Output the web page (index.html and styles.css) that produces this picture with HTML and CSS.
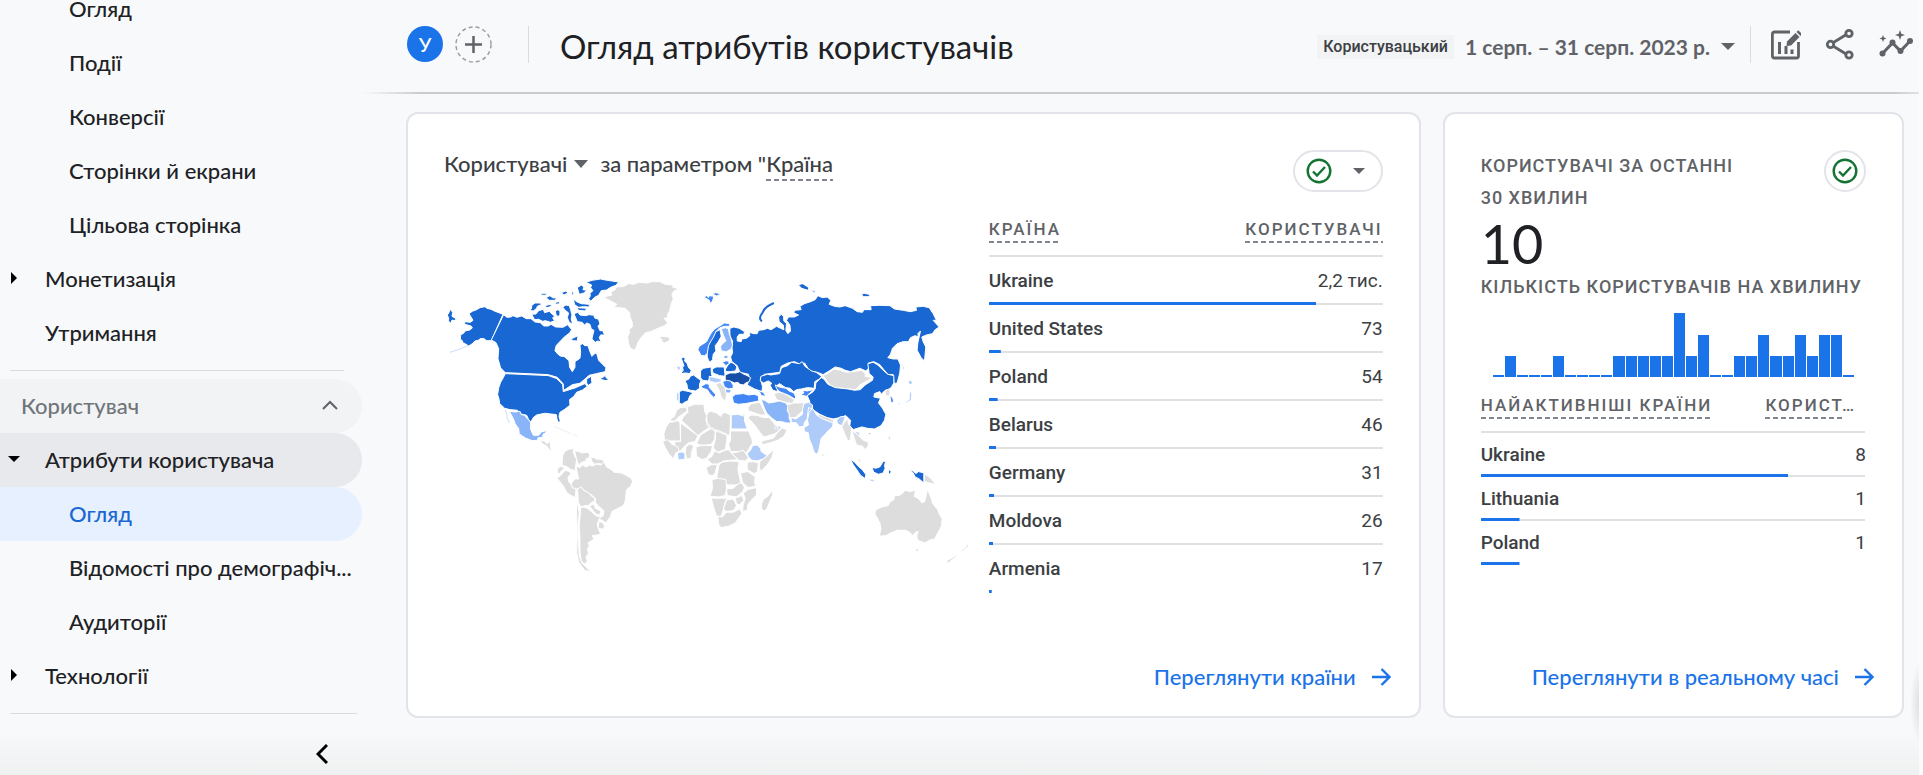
FILE: index.html
```html
<!DOCTYPE html>
<html lang="uk">
<head>
<meta charset="utf-8">
<title>Огляд атрибутів користувачів</title>
<link rel="stylesheet" href="styles.css">
</head>
<body>
<div class="app">
  <nav class="sidebar" aria-label="Звіти">
    <ul class="nav-list nav-top">
      <li><a class="nav-item child" href="#">Огляд</a></li>
      <li><a class="nav-item child" href="#">Події</a></li>
      <li><a class="nav-item child" href="#">Конверсії</a></li>
      <li><a class="nav-item child" href="#">Сторінки й екрани</a></li>
      <li><a class="nav-item child" href="#">Цільова сторінка</a></li>
      <li><a class="nav-item" href="#"><span class="mark"><svg width="6" height="12" viewBox="0 0 6 12"><path d="M0 0l6 6-6 6z"/></svg></span>Монетизація</a></li>
      <li><a class="nav-item" href="#"><span class="mark"></span>Утримання</a></li>
    </ul>
    <hr class="rule">
    <button class="nav-item section" type="button">Користувач
      <svg width="16" height="10" viewBox="0 0 16 10" fill="none" stroke="#5f6368" stroke-width="2"><path d="M1 9l7-7 7 7"/></svg>
    </button>
    <ul class="nav-list">
      <li><a class="nav-item open" href="#"><span class="mark"><svg width="12" height="6" viewBox="0 0 12 6"><path d="M0 0h12L6 6z"/></svg></span>Атрибути користувача</a></li>
      <li><a class="nav-item child current" href="#" aria-current="page">Огляд</a></li>
      <li><a class="nav-item child" href="#">Відомості про демографіч...</a></li>
      <li><a class="nav-item child" href="#">Аудиторії</a></li>
      <li><a class="nav-item" href="#"><span class="mark"><svg width="6" height="12" viewBox="0 0 6 12"><path d="M0 0l6 6-6 6z"/></svg></span>Технології</a></li>
    </ul>
    <hr class="rule wide">
    <button class="collapse" type="button" aria-label="Згорнути"><svg width="12" height="20" viewBox="0 0 12 20" fill="none" stroke="#000" stroke-width="3"><path d="M11 1l-9 9 9 9"/></svg></button>
  </nav>

  <main class="main">
    <header class="header">
      <button class="avatar" type="button">У</button>
      <button class="add" type="button" aria-label="Додати порівняння"><svg width="37" height="37" viewBox="0 0 37 37" fill="none"><circle cx="18.500" cy="18.500" r="17.500" stroke="#9aa0a6" stroke-width="1.500" stroke-dasharray="4 3"/><path d="M18.500 10v17M10 18.500h17" stroke="#5f6368" stroke-width="2.500"/></svg></button>
      <span class="divider"></span>
      <h1 class="title">Огляд атрибутів користувачів</h1>
      <button class="date" type="button"><span class="chip">Користувацький</span><span>1 серп. – 31 серп. 2023 р.</span><svg width="14" height="7" viewBox="0 0 14 7" fill="#5f6368"><path d="M0 0h14L7 7z"/></svg></button>
      <span class="divider"></span>
      <div class="tools">
        <button type="button" aria-label="Налаштувати звіт"><svg width="32" height="32" viewBox="0 0 32 32" fill="none" stroke="#5f6368" stroke-width="2.800"><path d="M21 4H5.500Q3.400 4 3.400 6v22q0 2 2.100 2h22q2 0 2-2V14"/><path d="M10.500 14v12M17 18v8M23 21.500v4.500" stroke-width="3"/><path d="M17.500 18l.5-4.500L26.500 5l4 4-8.500 8.500z" fill="#5f6368" stroke="none"/><path d="M27.500 4l1.800-1.800 4 4L31.500 8z" fill="#5f6368" stroke="none"/></svg></button>
        <button type="button" aria-label="Поділитися"><svg width="30" height="32" viewBox="0 0 30 32" fill="none" stroke="#5f6368" stroke-width="2.800"><path d="M8 14.700l13-8M8 18l13 8"/><circle cx="5.500" cy="16.400" r="3.200"/><circle cx="24" cy="5.500" r="3.200"/><circle cx="24" cy="27" r="3.200"/></svg></button>
        <button type="button" aria-label="Статистика"><svg width="34" height="32" viewBox="0 0 34 32" fill="#5f6368"><path d="M3.500 25.500l10-10.500 8 8 9.500-10" fill="none" stroke="#5f6368" stroke-width="3"/><circle cx="3.500" cy="25.500" r="3"/><circle cx="13.500" cy="14.500" r="3"/><circle cx="21.500" cy="23" r="3"/><circle cx="31" cy="13" r="3"/><path d="M21 2l1.300 3.700L26 7l-3.700 1.300L21 12l-1.300-3.700L16 7l3.700-1.300zM4 7l1 2.500 2.500 1L5 11.500 4 14l-1-2.500-2.500-1L3 9.500z"/></svg></button>
      </div>
    </header>

    <div class="cards">
      <section class="card">
        <div class="card-head">
          <h2 class="card-title"><button class="metric" type="button">Користувачі<svg width="14" height="8" viewBox="0 0 14 8" fill="#5f6368"><path d="M0 0h14L7 8z"/></svg></button><span>за параметром "<span class="dashed">Країна</span></span></h2>
          <button class="status pill" type="button" aria-label="Якість даних"><svg width="26" height="26" viewBox="0 0 26 26" fill="none" stroke="#137333" stroke-width="2.400"><circle cx="13" cy="13" r="11.300"/><path d="M7 13.500l4 4 8-8.500"/></svg><svg width="12" height="6" viewBox="0 0 12 6" fill="#5f6368"><path d="M0 0h12L6 6z"/></svg></button>
        </div>
        <div class="geo">
          <svg class="map" viewBox="42 40 1590 900" role="img" aria-label="Карта світу">
            <g class="b">
              <path d="M117 162l10-7 13-5 10-6 15-3 6 5 12 3 10 5 26 10-35 79-14 0-8-6-12 0-5 5-10 2-9 9-10 6-13-8-5-2-1-6-6-4 1-14 9-4 4-7 14-3 8-6-4-6-19-5 0-8 17 2 8-6z"/>
              <path d="M52 166l4-5 4-12 8 9-2 12 14 8-8 5-6-2-3 10-8-7 1-8z"/>
              <path d="M221 165l10 8 12-1 6-4 12 5 14-4 14 8 14 0 12 10 16 2 10 10 14 0 8-5 14 8 22 1 14-8 12 15-6 10-16 12-14 15-10 10-4 16 8 10 8 6 12 2 14 12 2 20 8 13 8-13 0-17 15-10 2-18-2-22 8-4 6 6 10 0 6 18 6 14 8-8 6-2 6 22 8 8 14 14-2 12-26 6-22 5-14 12-14 12-22 4-28 18 0-20-18-20-28-8-128-6-14-14-8-28 2-30-8-18-14-8z"/>
              <path d="M226 342L355 348L380 357L398 375L400 396L435 385L465 372L472 380L458 391L440 398L432 410L419 420L420 437L403 450L390 458L387 470L391 484L386 490L381 478L379 465L362 463L345 461L320 466L310 474L303 487L296 480L290 467L272 463L262 452L240 450L224 446L209 432L207 418L203 405L206 385L212 368L221 352z"/>
              <path d="M470 358l14-8 2 20-12 8-4-8zM512 354l8-1 6-6 3 8 8 5-9 3-14-3zM420 238l10-3 14-7-2 16-12-1z"/>
              <path d="M468 68l18-6 26-4 14 3 40 6-8 10-16 6-12 8-16 2-8 14-12 6-12 12-6-8 5-8-1-8 9-8-7-9 3-8zM442 84l12-8 8 6-3 8 11 2-8 8-14 4zM432 162l12-4 6 8 16 2 12-3 14 2 2 8 12 4 4 14-6 6 6 14 8 0 6 13-12 0-4 8 6 14-10-4-8 4-10-10 4-18 2-8-8-4-4-14-10-4-6 6-8-8-14-2z"/>
              <path d="M305 164l13-1 8-10 14-4 4 10 14-4 8 8 8 6-6 6 6 8-12 5-16-5-8 2-12-6-12 1zM296 152l8-4 2-12 10-6 14 0 6 4-14 6-2 6-10 8zM430 118l10 8 14 6 24 2 0 8-18-1-14 2-12-8zM348 114l12-6 8 6 14 2-8 6-16 0zM376 154l8-4 6 4 0 10-6 8-6-8zM394 99l14-5 6 6-12 6zM398 142l10-6 10 2 4 12 4 16-2 12 4 16-10-6-6-14 4-14-10-8zM330 106l8-5 14 0-6 6zM425 95l6 4 0 8-5-2zM376 128l12-2 2 6-12 2zM440 144l30 2-4 8-20-2zM345 138l16-4 4 6-14 4z"/>
            </g>
            <path class="l" d="M238 455l16 2 16-2 4 10 10 2 8 10 10 10 0 22 8 18 16 0 8-10 16-4-4 8-6 2-2 10-14 2-2 8-16 0-20-8-18-12-2-16-10-14-6-16z"/>
            <path class="thin-l" d="M225 450l6 14 0 10 8 16M60 278l25-8 30-12"/>
            <g class="g">
              <path d="M520 112l26-6-4-10 12-4 6-10 22-2 14-8 16 2 14-6 26 2 12-4 26 0 16 8 24 2-2 6 20 6-16 6-6 10 4 14-6 14-2 10-4 14-6 10 2 8-12 2 12 14-10 8-20 8-22 10-16 4-14 16-8 12-6 18-6 6-12-8-4-12-3-20 6-14-2-8 10-8 0-14-6-14-2-16-14-12-18-2-16-2 10-8z"/>
              <path d="M687 233l10-3 20 2 3 10-16 8-8-3 0-8zM328 541l16 4 8 8 8-8 2 10 0 12 8 8-12-4-8-12-12-6z"/>
              <path d="M398 588l6-12 12-7 16-2-2 12 6 14 4 6-2 14-2 20-14-4-12-8-14-4zM434 574l14 2 6 4 18-2 8 8-2 8-10 4 0 8-14 2-6 10-6-12-4-14zM482 592l10 2 6 4 18 2 8 6-6 8-14-2-10 2-8-8zM384 624l10-4 10 6-10 8-4 8-8-2zM380 654l10-4 10-12 8-6 16 8-10 14 2 12 12 14 8 0 2 10-2 24-16-8-10-8-12-22z"/>
              <path d="M438 620l12 4 8-8 10 6 12-6 6 4 12-6 16 2 8-10 8 16 14 8 8 8 22 2 16 8 14 8 4 10-6 14-12 10-2 14-2 20-6 14-20 10-14 8-4 14-14 20-12-8-10-4 14-10 2-14-16-14-10-12 0-12-14-12-16-8-10-10-16 2-14-4-2-12 10-14 12 0z"/>
              <path d="M443 688l10-6 8 10 16 8 8 10 8 4 2 12-10 2-10 10-10 0-12 4-8-14zM478 738l14-4 4 12 16 8-2 12-12-2zM452 746l8-4 12 4 12 10 16 14 12 0-6 12-4 14 4 14 6 12-8 4-18 2 6 10-8 6-10 6 4 8-6 12 4 10-8 12 4 12-6 10-12-8-4-30 0-40-2-36zM508 785l12 6 4 10-6 8-14-4zM440 716l4 24 4 20-4 40 2 52 2 38 8 20 14 14 12 14-18-6-18-24-6-30 2-50-2-60z"/>
            </g>
            <path class="thin-g" d="M372 500l28 12 22 10M14 514l4 2M430 524l12 4"/>
            <g transform="translate(690 0)">
              <g class="g">
                <path d="M28 482l16-12 6-18 12-8 18-2 2 12-14 10-14 10-8 12zM12 522l6-18 10-16 18-2 0-6 14 8 2 56-48 0zM64 482l8-12 12-12-2-16 22-8 28 0 2 20 6 14-2 16 14 18-20 12-18 14zM62 490l52 38-8 18-22 4-12 12-12 14-18-12 4-18 16 0zM140 466l10-12 20 6 12 10 10-12 20 8-2 58-6 4-50-20-12-10zM212 514l54 0 10 24 2 12-12 20-8 10-14-4-32 0-6-22 6-12zM110 552l12-26 36-22 8 14-2 22-10 14-14 2-20 0zM168 510l34 14-2 24-4 22-24 8-12-14 6-24z"/>
                <path d="M108 562l16-4 34 0-4 18-14 20-14 4-16-10zM8 546l14-6 14 14 18 8 4 14-10 4-8 18-14-16-10-18zM78 562l10-8 14 4-8 22 0 16-14 2-4-18zM142 600l14-10 8-16 14 6 18-8 10-2 10 12 18 18-22 2-20 2-16 8-16 4zM214 580l16-2 20-6 6 8 10 14-10 10-20-2zM300 606l20-16 10-10 12-10-6 24-14 22-20 20-4-14zM262 608l16-2 18 4-4 28-10 4-20-12zM176 620l8-12 26-4 28 2-4 22 4 20 4 22-14 6-26 0-12-14-20-2zM138 624l12-6 14-6 8 4-6 24-8 8-12-2z"/>
                <path d="M242 640l22-4 22 16-2 16 4 12-24 4-16-16zM156 660l20-4 22 4 2 28-4 20-20 4-26-2 8-24zM200 688l20-2 16-14 10-2 8 14-6 12-18 16-28-4zM262 690l28-6 0 22-14 14-12 14-2 18-14 4 2-20 6-20-6-16 10-6zM154 716l48 0-8 22-6 18-4 14-14 0-8-24zM198 722l22-4 10 20-8 14-22 4-10-8zM226 716l20-8 6 14-14 14-8-4zM174 770l14 2 12-14 20 0 20-10 6 14-10 14-10 14-20 10-22 4-8-10z"/>
                <path d="M337 693l2 10-8 20-10 24-8 8-8-8 0-14 6-14 12-8z"/>
                <path d="M264 444l10-12 26-4 8 16 10 22-16 0-18-6-18-6zM264 474l10-8 20 2 16 6 18 0 12 14 6 8 18 6-4 10-18 12-30 8-12-14-16-22zM306 556l0-12 34-8 20-26 6-6 16 8-10 18-18 12-24 8zM244 466l10-4 2 16-6 4z"/>
                <path d="M342 402l14-4 14 2 14 8 20 12-6 12-22-4-26-8zM382 436l20-6 18 0 12-2 2 18-8 10-12 10-8 8-16 0-6-18zM474 463l12 4 36 14-2 8-20-2-24-8zM546 500l10-14 8-8 2 16 10 10-2 14-2 22-8 4-10-22zM576 512l10 8 16-4-4 14 12 12 16 6-2 14-10 8-6-10-18-4-6-18zM490 348l16-8 16-12 20 4 16 6 22-2 24-4 12 8 0 10 22 4-20 12-18 10-12 14-28-2-44-6-14-16zM676 394l14-8 0 16-4 10-10-8zM168 374l12-6 12 12 8 10 0 16-4 20-12-14-6-20zM488 580l5 8-3 6-4-8zM594 596l8 4 2 12-8-8zM684 528l8 4 0 10-6-2z"/>
                <path d="M645 762l4-12 18-8 18-4 6-12 10-4 4-14 12 0 10-6 10-10 12 4 18-4-4 18 14 8 10 12 8-4 4-18 4-18 6 14 6 14 4 14 14 18 6 14 8 14-2 22-10 18-10 20-16 4-14 8-22-8-2-14 4-12-8 2-8 10-10-10-12-6-24 0-20 8-14 8-20 2 4-22-2-16zM766 868l12 0-6 12zM858 904l18-8 20-16-10 14-20 16zM900 882l8-12 8-6 8-12 2 8-14 12zM794 643l12 8 10 8 12 18-14-6-10-2-10-4z"/>
              </g>
              <g class="b">
                <path d="M210 206L222 202L238 206L254 216L252 224L238 224L232 232L232 244L244 246L246 238L260 236L270 228L268 218L282 222L292 222L296 212L312 210L322 206L334 210L350 200L362 206L372 210L370 196L358 186L356 172L364 164L371 170L372 184L380 192L378 212L384 222L392 214L390 196L380 182L386 172L404 172L416 166L402 160L404 152L424 150L420 140L434 132L452 126L466 120L474 108L488 114L502 112L513 122L508 134L524 140L540 142L556 138L578 146L592 156L608 158L612 150L634 150L632 138L660 137L690 138L704 148L730 152L752 156L770 152L768 142L790 140L808 144L820 162L830 182L820 182L838 202L826 210L818 222L800 226L786 232L790 246L798 262L794 304L784 294L772 272L774 250L782 214L774 222L776 232L766 228L752 234L746 246L730 246L712 252L698 266L692 284L684 294L700 298L714 298L722 316L720 340L712 370L703 372L700 345L685 345L672 330L660 315L642 306L626 310L628 324L618 334L600 326L572 336L556 332L544 326L526 322L508 334L490 345L472 338L450 334L434 310L420 314L404 306L384 310L364 320L360 338L330 342L314 344L302 354L304 366L308 382L306 396L284 388L262 376L268 358L266 344L240 338L232 318L216 306L212 292L218 280L216 260L218 244L210 230z"/>
                <path d="M142 256l8-8 4-16 10-14 16-8 4 20-10 18-8 10 2 16-8 10-2 16-6 6-6-2-4-14z"/>
                <path d="M64 296l6-3 6 3-2 8 8 8 4 12 8 8-4 10-14-2-14 2 8-10-2-8 4-6zM75 364l12-6 4-8 10-4 10 8 12 8-4 12 0 12-12 8-16-2-8-4-2-14zM58 396l10-4 20 4 12 4-10 8-6 16-10 4-8 6-8-4zM122 334l8-8 12-2 12-2 0 14 2 12-8 10-4 6-16-2-6-8zM157 328l12-6 24 0 2 20 0 8-16-2-20-8zM197 328l6-10 10-10 10 4 8 10-4 12-16 2-14 0z"/>
                <path d="M301 364l2-14 20-6 10 2 26-4 6-18 18-6 12-10 24 4 8-6 8 14 20 14 14 4 16 12-6 8-14 8-2 20-20-2-18 4-14 2-10 6-10-10-14-2-18-12-8 6 2 18-14-4-8-14 4-8-10-6-14 6z"/>
                <path d="M442 408L458 398L466 388L468 370L484 354L492 358L504 374L526 384L564 388L584 392L602 390L616 376L638 362L640 352L628 342L624 312L640 308L654 316L668 330L684 344L702 348L702 370L694 384L688 388L676 392L664 404L660 396L644 402L642 412L662 416L656 430L668 446L678 464L674 482L664 498L644 508L622 506L606 502L580 510L570 498L572 482L558 468L540 474L520 478L502 474L480 464L462 452L448 440L450 426zM626 520l8 0-4 6z"/>
                <path d="M415 75l14-3 18 12-2 8-20-6zM455 91l12 2-4 6zM605 104l8-3 20 4-8 6-14 0zM572 599l12 8 12 14 12 10 10 14-2 12-14-10-12-18-10-14zM636 624l12 2 12-4 10-16 8-2-4 14 2 8-6 14-14 4-14-6zM686 630l8 4-2 10-6-2zM750 630l10 4 8 8 8-6 16 4 0 30-14-12-12-6-6-12zM622 658l14 2 14 6-14-2z"/>
              </g>
              <path class="nz" d="M306 185q-12-8 2-26 6-18 34-29"/>
              <path class="d" d="M196 346l14-6 18 0 12-4 8 6 14 6 10 6-4 12-10 4-8 6-10-2-6-6-10 2-10-4-18 2z"/>
              <g class="m">
                <path d="M132 112l8-4 6 6 2-6 14 2-4 14-6 8-4-10zM156 102l12-3 16 4-14 6zM114 270l4-10 10-6 12-8 6-12 8-14 10-12 14-8 16-10 16 2-2 8-14 0-14 4-12 12-8 18-8 12-6 12-4 24-8 6-10 0zM188 366l12-4 12 2 8 12 0 10-14 2-12-6zM124 380l14-8 10 2 0 10 10 10 10 12-6 8-12-12-8-12-14-4zM217 412l10-8 24-2 14 4 18-2 12 4 2 16-20 4-20 4-22 2-14-4zM346 376l12 6 20 4 10 8 14 6 6 12-4 6-16-10-14-6-16-6-8-10zM428 392l14 2 20-4-12 10-10 10-18-4 10-6zM282 390l16 4 12 4 8 12-14-2-4-10zM690 408l8 6 4 12-8 4zM188 308l8-4 10 0 2 8-10 6zM188 294l8-6 10 2-4 6z"/>
              </g>
              <g class="l">
                <path d="M184 208l12-4 10 4 2 14 6 16 4 18-4 12-14 8-16-2-2-14 8-10 8-6-6-14zM304 420l10 2 12 8 16-2 16-4 20 6 6 10-2 12 6 12 0 12 6 14-14 0-16-4-14 0-16-12-14-14-8-18zM344 502l12 2 4-6 2 6-4 4-12 0zM196 388l18 2-2 10-14 0z"/>
              </g>
              <g class="p">
                <path d="M214 466l20-2 20 6 0 14 8 24-48 0zM262 582l10-10 6-14 14-2 10 10 2 10 18 12-12 10-18 6-16-2-10-10zM53 580l10-3 12 2 0 20-20 2zM394 474l14 4 20-14 0-14 4-18 14-4 12 8 0 10-10 12-4 18-10 12-2 12-14 2-8-12-16-2zM446 444l14 4 10 18 14 10 20 8 16 6-2 12-12 10-10 12-12 12-4 20-4 20-6 8-8-8-6-20-8-18-2-18-12-4-2-12 14-8-4-20zM530 482l10-10 16-2-4 14-6 14-12-4zM148 350l18 4 18 4 0 8-16 4-20-6zM50 400l7-2 0 26-7 0zM50 322l8-4 4 8-6 8zM744 366l8-4 8 8-10 6zM750 390l6 14-2 18-18 10 0-4 12-8zM586 514l10 4 4 10-8-2zM722 300l12 26-4 4zM714 426l8 4-2 8z"/>
              </g>
            </g>
          </svg>
          <table class="data">
            <thead><tr><th scope="col"><span class="dashed">КРАЇНА</span></th><th scope="col"><span class="dashed">КОРИСТУВАЧІ</span></th></tr></thead>
            <tbody>
              <tr style="--bar:83%"><td>Ukraine</td><td>2,2 тис.</td></tr>
              <tr style="--bar:3%"><td>United States</td><td>73</td></tr>
              <tr style="--bar:2.2%"><td>Poland</td><td>54</td></tr>
              <tr style="--bar:1.9%"><td>Belarus</td><td>46</td></tr>
              <tr style="--bar:1.3%"><td>Germany</td><td>31</td></tr>
              <tr style="--bar:1.1%"><td>Moldova</td><td>26</td></tr>
              <tr style="--bar:.7%"><td>Armenia</td><td>17</td></tr>
            </tbody>
          </table>
        </div>
        <a class="more" href="#">Переглянути країни<svg width="19" height="18" viewBox="0 0 19 18" fill="none" stroke="#1a73e8" stroke-width="2.400"><path d="M0 9h17M9.500 1l8 8-8 8"/></svg></a>
      </section>

      <section class="card">
        <div class="card-head">
          <h2 class="label">КОРИСТУВАЧІ ЗА ОСТАННІ<br>30 ХВИЛИН</h2>
          <button class="status" type="button" aria-label="Якість даних"><svg width="26" height="26" viewBox="0 0 26 26" fill="none" stroke="#137333" stroke-width="2.400"><circle cx="13" cy="13" r="11.300"/><path d="M7 13.500l4 4 8-8.500"/></svg></button>
        </div>
        <p class="big">10</p>
        <h3 class="label">КІЛЬКІСТЬ КОРИСТУВАЧІВ НА ХВИЛИНУ</h3>
        <div class="bars" role="img" aria-label="Користувачі за хвилину">
          <i></i><i class="n1"></i><i></i><i></i><i></i><i class="n1"></i><i></i><i></i><i></i><i></i>
          <i class="n1"></i><i class="n1"></i><i class="n1"></i><i class="n1"></i><i class="n1"></i><i class="n3"></i><i class="n1"></i><i class="n2"></i><i></i><i></i>
          <i class="n1"></i><i class="n1"></i><i class="n2"></i><i class="n1"></i><i class="n1"></i><i class="n2"></i><i class="n1"></i><i class="n2"></i><i class="n2"></i><i></i>
        </div>
        <table class="data compact">
          <thead><tr><th scope="col"><span class="dashed">НАЙАКТИВНІШІ КРАЇНИ</span></th><th scope="col"><span class="dashed">КОРИСТ</span>…</th></tr></thead>
          <tbody>
            <tr style="--bar:80%"><td>Ukraine</td><td>8</td></tr>
            <tr style="--bar:10%"><td>Lithuania</td><td>1</td></tr>
            <tr style="--bar:10%"><td>Poland</td><td>1</td></tr>
          </tbody>
        </table>
        <a class="more" href="#">Переглянути в реальному часі<svg width="19" height="18" viewBox="0 0 19 18" fill="none" stroke="#1a73e8" stroke-width="2.400"><path d="M0 9h17M9.500 1l8 8-8 8"/></svg></a>
      </section>
    </div>
  </main>
</div>
</body>
</html>
```
FILE: styles.css
```css
* { box-sizing: border-box; }

:root {
  --display: Lato, "Open Sans", sans-serif;
  --text: Roboto, "Liberation Sans", sans-serif;
  --blue: #1a73e8;
  --grey: #5f6368;
  --line: #dadce0;
}

body {
  margin: 0;
  background: #f8f9fb;
  color: #202124;
  font-family: var(--text);
}

h1, h2, h3, p, ul { margin: 0; padding: 0; font-weight: inherit; }
ul { list-style: none; }
a { color: inherit; text-decoration: none; }
svg { flex: none; display: block; }

button {
  padding: 0;
  border: 0;
  background: none;
  color: inherit;
  font: inherit;
  cursor: pointer;
}

.app {
  display: flex;
  min-height: 100vh;
  overflow: hidden;
  background:
    linear-gradient(#fbfbfc, #fbfbfc) 100% 0 / 4px 100% no-repeat,
    radial-gradient(ellipse 10px 40px at calc(100% - 3px) calc(100% - 72px), #dcdddf, transparent),
    linear-gradient(#f8f9fb calc(100% - 44px), #eff0f0);
}

/* Sidebar */
.sidebar {
  flex: none;
  width: 362px;
  display: flex;
  flex-direction: column;
  font-family: var(--display);
  font-size: 22px;
  font-weight: 500;
}

.nav-top { margin-top: -18px; }

.nav-item {
  display: flex;
  align-items: center;
  width: 100%;
  height: 54px;
  padding-bottom: 2px;
  border-radius: 0 27px 27px 0;
  white-space: nowrap;
}

.nav-item.child { padding-left: 69px; }
.mark { width: 45px; padding-left: 11px; }
.nav-item.open { background: #e8e9ec; }
.open .mark { padding-left: 8px; }
.nav-item.current { background: #e6f0fe; color: #1967d2; }

.nav-item.section {
  justify-content: space-between;
  padding: 0 24px 2px 21px;
  background: #f1f3f4;
  color: #70757a;
}

.rule {
  width: 334px;
  height: 1px;
  margin: 10px 0 8px 10px;
  border: 0;
  background: var(--line);
}

.rule.wide { width: 347px; margin-bottom: 30px; }
.collapse { align-self: flex-end; margin-right: 34px; }

/* Header */
.main { flex: 1; min-width: 0; }

.header {
  display: flex;
  align-items: center;
  height: 94px;
  padding: 0 10px 6px 45px;
  background: linear-gradient(90deg, transparent, #c9cacd 60px, #c9cacd calc(100% - 30px), #e2e3e5 calc(100% - 4px), transparent 0) 0 100% / 100% 2px no-repeat;
}

.avatar {
  width: 36px;
  height: 36px;
  border-radius: 50%;
  background: var(--blue);
  color: #fff;
  font-family: var(--display);
  font-size: 20px;
  font-weight: 500;
}

.add { margin-left: 12px; }
.divider { flex: none; width: 1px; height: 37px; background: var(--line); }
.add + .divider { margin: 0 31px 0 36px; }

.title {
  flex: 1;
  padding-top: 4px;
  font-family: var(--display);
  font-size: 33px;
  line-height: 40px;
  white-space: nowrap;
}

.date {
  display: flex;
  align-items: center;
  gap: 11px;
  padding-top: 5px;
  margin-right: 15px;
  color: var(--grey);
  font-family: var(--display);
  font-size: 21px;
  font-weight: 700;
  white-space: nowrap;
}

.chip {
  padding: 0 6px;
  background: #f1f3f4;
  color: #3c4043;
  font-family: var(--text);
  font-size: 16px;
  font-weight: 500;
  line-height: 24px;
}

.tools { display: flex; gap: 24px; margin-left: 18px; }

/* Cards */
.cards {
  display: grid;
  grid-template-columns: 1014fr 461fr;
  gap: 22px;
  padding: 18px 19px 57px 44px;
}

.card {
  display: flex;
  flex-direction: column;
  min-width: 0;
  min-height: 606px;
  padding: 36px;
  border: 2px solid #e3e4e9;
  border-radius: 12px;
  background: #fff;
}

.card-head { display: flex; justify-content: space-between; }

.card-title {
  display: flex;
  gap: 12px;
  align-self: flex-start;
  color: #3c4043;
  font-family: var(--display);
  font-size: 22px;
  font-weight: 500;
  line-height: 28px;
}

.metric { display: flex; align-items: center; gap: 7px; }

.dashed {
  background: repeating-linear-gradient(90deg, #80868b 0 5px, transparent 5px 8px) 0 100% / 100% 2px no-repeat;
  padding-bottom: 4px;
}

.status {
  display: flex;
  align-items: center;
  justify-content: center;
  gap: 21px;
  width: 42px;
  height: 42px;
  border: 2px solid #e3e4e9;
  border-radius: 21px;
}

.status.pill { width: 90px; padding-right: 4px; }

.geo {
  display: grid;
  grid-template-columns: 530fr 394fr;
  gap: 15px;
  margin-top: 19px;
}

.map { width: 100%; height: auto; margin-top: 62px; stroke: #fff; stroke-width: 3; stroke-linejoin: round; }
.g { fill: #ddd; }
.b { fill: #1967d2; }
.d { fill: #174ea6; }
.m { fill: #4285f4; }
.l { fill: #8ab4f8; }
.p { fill: #aecbfa; }
.nz { fill: none; stroke: #1967d2; stroke-width: 6; }
.thin-l { fill: none; stroke: #aecbfa; stroke-width: 2; }
.thin-g { fill: none; stroke: #e6e6e6; stroke-width: 2; }

/* Data tables */
.data {
  width: 100%;
  align-self: start;
  border-spacing: 0;
  color: #3c4043;
  font-size: 19px;
}

.data th, .label {
  color: var(--grey);
  font-size: 18px;
  font-weight: 500;
  letter-spacing: 1px;
}

.data th {
  height: 46px;
  padding: 0 0 10px;
  font-size: 17px;
  letter-spacing: 2px;
  text-align: left;
  white-space: nowrap;
}

.data td { padding: 0; height: 48px; line-height: 22px; }
.data td:first-child { font-weight: 500; }
.data th:last-child, .data td:last-child { text-align: right; }

.data thead tr { background: linear-gradient(#e0e1e4, #e0e1e4) 0 100% / 100% 2px no-repeat; }

.data tbody tr {
  background:
    linear-gradient(var(--blue), var(--blue)) 0 100% / var(--bar) 3px no-repeat,
    linear-gradient(#e0e1e4, #e0e1e4) 0 100% / 100% 2px no-repeat;
}

.data tbody tr:last-child {
  background: linear-gradient(var(--blue), var(--blue)) 0 100% / var(--bar) 3px no-repeat;
}

.data.compact td { height: 44px; }
.data.compact th:last-child { padding-right: 10px; }

.label { line-height: 32px; }

.big {
  margin-top: 3px;
  font-family: var(--display);
  font-size: 54px;
  line-height: 54px;
}

.bars {
  display: flex;
  align-items: flex-end;
  gap: 1px;
  height: 64px;
  margin: 10px 12px;
}

.bars i { flex: 1; height: 2px; background: var(--blue); }
.bars .n1 { height: 21px; }
.bars .n2 { height: 42px; }
.bars .n3 { height: 64px; }

.more {
  display: flex;
  align-items: center;
  align-self: flex-end;
  gap: 16px;
  margin: auto -8px -11px 0;
  color: var(--blue);
  font-family: var(--display);
  font-size: 22px;
  font-weight: 500;
  line-height: 28px;
}
```
